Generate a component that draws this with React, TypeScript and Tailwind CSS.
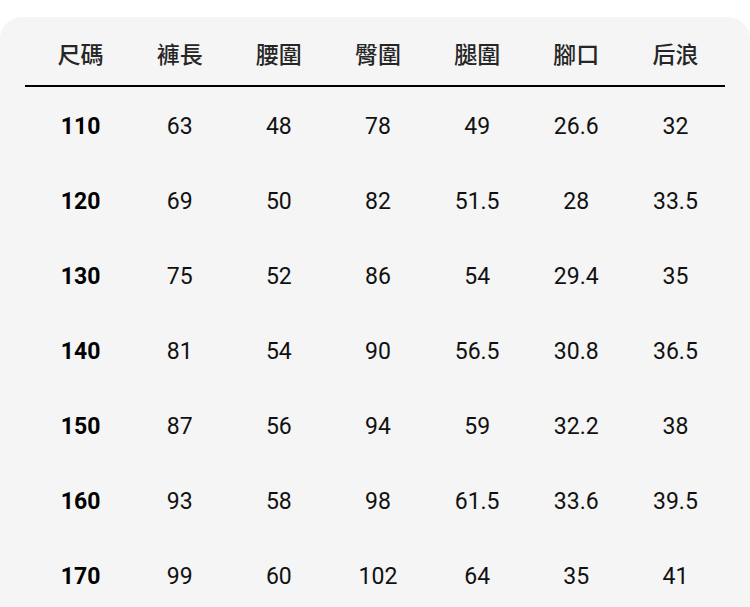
import React from "react";

const headers = ["尺碼", "褲長", "腰圍", "臀圍", "腿圍", "腳口", "后浪"];

const rows = [
    ["110", "63", "48", "78", "49", "26.6", "32"],
    ["120", "69", "50", "82", "51.5", "28", "33.5"],
    ["130", "75", "52", "86", "54", "29.4", "35"],
    ["140", "81", "54", "90", "56.5", "30.8", "36.5"],
    ["150", "87", "56", "94", "59", "32.2", "38"],
    ["160", "93", "58", "98", "61.5", "33.6", "39.5"],
    ["170", "99", "60", "102", "64", "35", "41"],
];

export default function App() {
    return (
        <main className="w-[750px] h-[607px] bg-white pt-[17px] overflow-hidden" style={{ fontFamily: 'Roboto, "Noto Sans CJK TC", sans-serif' }}>
            <section className="h-full bg-[#f5f5f5] rounded-t-[22px] px-[25px]">
                <div className="grid grid-cols-7 pl-[6px] pt-[24px] h-[68px]">
                    {headers.map((h) => (
                        <span key={h} className="text-center text-[23px] leading-[30px] font-medium text-[#262626]">{h}</span>
                    ))}
                </div>
                <div className="h-[2px] bg-black" />
                <div className="flex flex-col mt-[3px]">
                    {rows.map((r) => (
                        <div key={r[0]} className="grid grid-cols-7 pl-[6px] h-[75px] items-center">
                            {r.map((c, i) => (
                                <span key={i} className={i === 0 ? "text-center text-[23px] font-bold text-black" : "text-center text-[23px] font-normal text-[#111]"}>{c}</span>
                            ))}
                        </div>
                    ))}
                </div>
            </section>
        </main>
    );
}
